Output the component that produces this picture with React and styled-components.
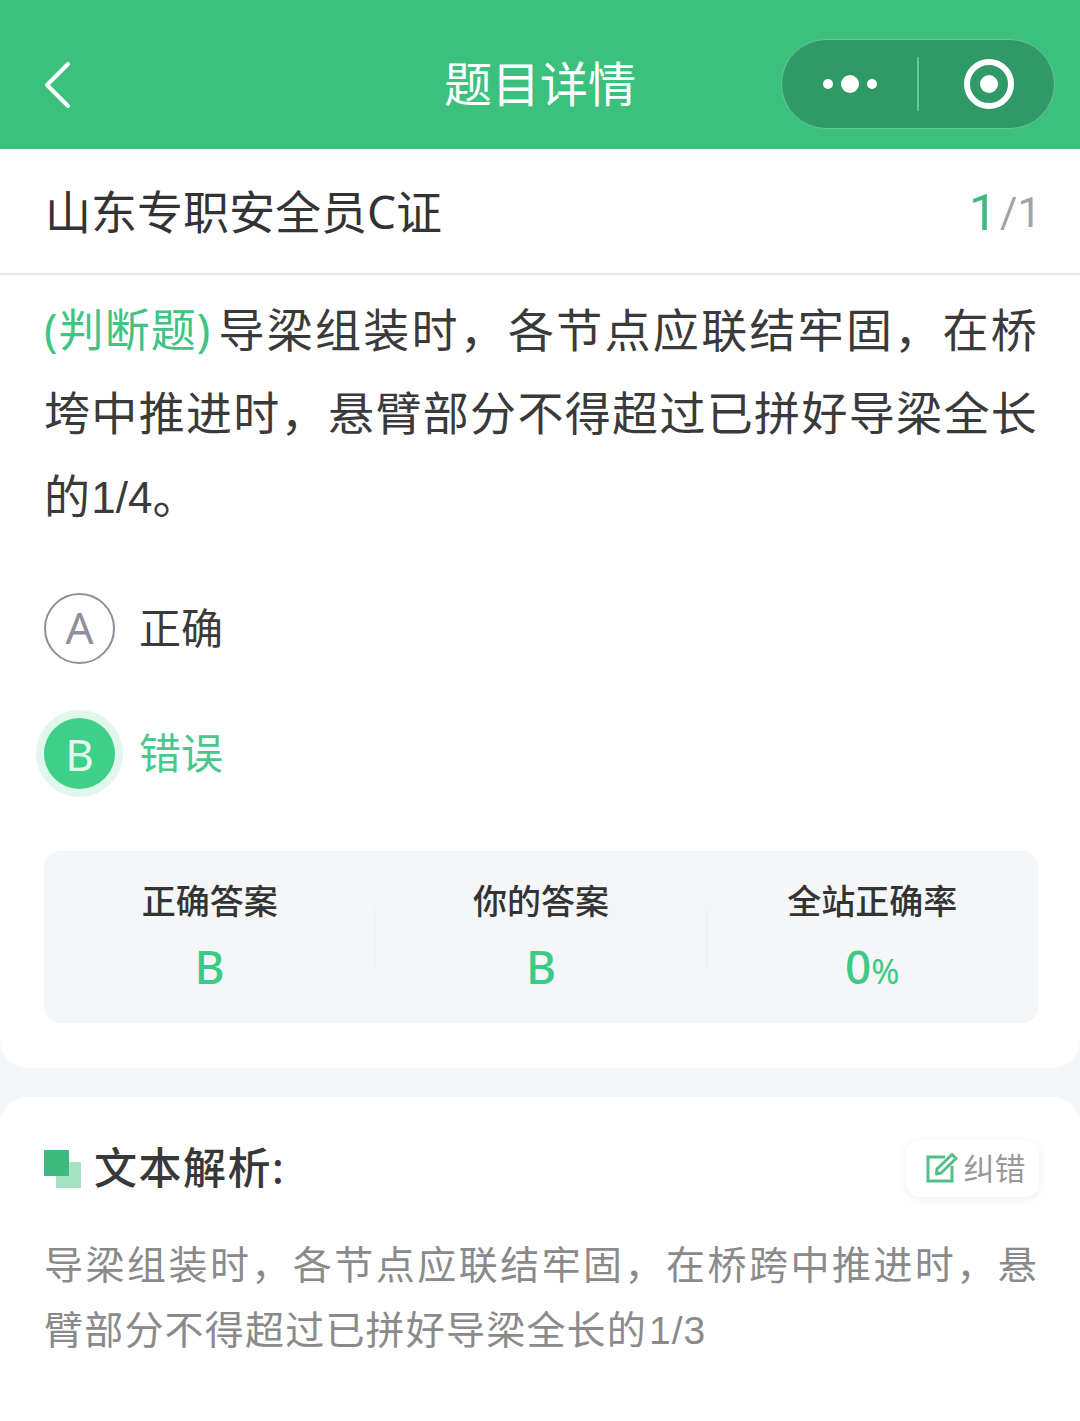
import styled, { createGlobalStyle } from 'styled-components';

const GlobalStyle = createGlobalStyle`
    html, body { margin: 0; padding: 0; background: #f5f6f7; }
    body { font-family: "Noto Sans", "Noto Sans CJK SC", sans-serif; }
    * { box-sizing: border-box; }
`;

const Page = styled.div`
    width: 1080px;
    height: 1421px;
    overflow: hidden;
    background: #f5f6f7;
`;

const NavBar = styled.header`
    height: 149px;
    background: #3cc07e;
    display: grid;
    grid-template-columns: 1fr auto 1fr;
    align-items: center;
    padding: 24px 25px 0;
`;

const BackIcon = styled.svg`
    width: 28px;
    height: 48px;
    margin-left: 18px;
    margin-top: -4px;
`;

const NavTitle = styled.h1`
    margin: -6px 0 0;
    font-size: 48px;
    line-height: 60px;
    font-weight: 400;
    color: #fff;
`;

const Capsule = styled.div`
    justify-self: end;
    width: 274px;
    height: 90px;
    margin-top: -6px;
    border-radius: 45px;
    background: #2f9968;
    border: 1.5px solid #66c796;
    display: flex;
    align-items: center;
`;

const CapsuleSide = styled.div`
    flex: 1;
    display: flex;
    align-items: center;
    justify-content: center;
    gap: 8px;
`;

const CapsuleDivider = styled.div`
    width: 1.5px;
    height: 54px;
    background: #66c796;
`;

const Dot = styled.span`
    width: ${p => p.$size}px;
    height: ${p => p.$size}px;
    border-radius: 50%;
    background: #fff;
`;

const Record = styled.div`
    width: 50px;
    height: 50px;
    margin-left: 5px;
    border-radius: 50%;
    border: 6px solid #fff;
    display: flex;
    align-items: center;
    justify-content: center;

    &::after {
        content: '';
        width: 18px;
        height: 18px;
        border-radius: 50%;
        background: #fff;
    }
`;

const SubHeader = styled.div`
    height: 126px;
    background: #fff;
    border-bottom: 2px solid #e8e8e8;
    padding: 0 39px 0 45px;
    display: flex;
    align-items: center;
    justify-content: space-between;
`;

const SubTitle = styled.div`
    font-size: 46px;
    color: #333;
    margin-top: -4px;
`;

const Counter = styled.div`
    display: flex;
    align-items: center;
    color: #a3a3a3;
    font-family: "Roboto", sans-serif;
    font-size: 42px;
    line-height: 50px;
    margin-top: 3px;
`;

const CounterCurrent = styled.span`
    color: #3dba7e;
    font-size: 50px;
    margin-right: 3px;
`;

const QuestionCard = styled.section`
    height: 793px;
    background: #fff;
    border-radius: 0 0 28px 28px;
    padding: 13px 42px 0 44px;
`;

const Question = styled.p`
    margin: 0;
    font-size: 46px;
    line-height: 83px;
    color: #3a3a3a;
    letter-spacing: 1.2px;
    text-align: justify;
`;

const Tag = styled.span`
    color: #3fc484;
    font-size: 45px;
    letter-spacing: 0;
    margin-right: 7px;
`;

const Digits = styled.span`
    font-family: "Liberation Sans", sans-serif;
    font-size: ${p => (p.$wide ? '39px' : '44px')};
    letter-spacing: ${p => (p.$wide ? '1px' : '0')};
    margin-left: ${p => (p.$wide ? '2px' : '0')};
`;

const OptionList = styled.div`
    margin-top: 54px;
    display: flex;
    flex-direction: column;
    gap: 54px;
`;

const Option = styled.div`
    display: flex;
    align-items: center;
    gap: 24px;
    height: 71px;
`;

const OptionBadge = styled.div`
    width: 71px;
    height: 71px;
    border-radius: 50%;
    display: flex;
    align-items: center;
    justify-content: center;
    font-size: 44px;
    font-weight: 400;
    padding-bottom: ${p => (p.$active ? '0' : '3px')};
    color: ${p => (p.$active ? '#e4f8ee' : '#8e8e9e')};
    background: ${p => (p.$active ? '#3dd088' : '#fff')};
    border: ${p => (p.$active ? 'none' : '2.5px solid #8e8e9e')};
    box-shadow: ${p => (p.$active ? '0 0 0 8px #e2f7ec' : 'none')};
`;

const OptionText = styled.div`
    font-size: 42px;
    margin-top: -7px;
    color: ${p => (p.$active ? '#4cc78b' : '#3a3a3a')};
`;

const Summary = styled.div`
    margin: 62px 0 0;
    height: 172px;
    background: #f5f6f7;
    border-radius: 16px;
    display: grid;
    grid-template-columns: repeat(3, 1fr);
    align-items: center;
`;

const SummaryCell = styled.div`
    height: 100%;
    position: relative;
    display: flex;
    flex-direction: column;
    align-items: center;
    padding-top: 25px;
    gap: 9px;

    & + &::before {
        content: '';
        position: absolute;
        left: -1px;
        top: 57px;
        width: 1px;
        height: 60px;
        background: #eceded;
    }
`;

const SummaryLabel = styled.div`
    font-size: 34px;
    line-height: 50px;
    font-weight: 500;
    color: #333;
`;

const SummaryValue = styled.div`
    font-size: 46px;
    line-height: 62px;
    font-weight: 500;
    color: #3dca87;
`;

const Percent = styled.span`
    font-size: 34px;
    font-weight: 400;
`;

const AnalysisCard = styled.section`
    margin-top: 29px;
    height: 340px;
    background: #fff;
    border-radius: 28px 28px 0 0;
    padding: 41px 41px 0 44px;
`;

const AnalysisHead = styled.div`
    display: flex;
    align-items: center;
    justify-content: space-between;
    height: 58px;
`;

const AnalysisTitle = styled.h2`
    margin: 0;
    display: flex;
    align-items: center;
    gap: 13px;
    font-size: 43px;
    font-weight: 500;
    color: #383838;
    letter-spacing: 1.5px;
`;

const TitleText = styled.span`
    margin-top: -3px;
`;

const SquaresIcon = styled.svg`
    width: 37px;
    height: 38px;
    margin-top: 3px;
`;

const FixButton = styled.button`
    width: 133px;
    height: 57px;
    margin-top: 2px;
    border: none;
    border-radius: 14px;
    background: #fff;
    box-shadow: 0 2px 10px rgba(0, 0, 0, 0.07);
    display: flex;
    align-items: center;
    justify-content: center;
    gap: 6px;
    font-family: inherit;
    font-size: 31px;
    color: #999;
    padding: 0 0 0 6px;
`;

const FixLabel = styled.span`
    margin-top: -3px;
`;

const Analysis = styled.p`
    margin: 35px 1px 0 0;
    font-size: 39px;
    line-height: 65px;
    color: #8a8a8a;
    letter-spacing: 1.2px;
    text-align: justify;
`;

function App() {
    return (
        <Page>
            <GlobalStyle />
            <NavBar>
                <BackIcon viewBox="0 0 28 48" fill="none">
                    <path d="M25 3 L4 24 L25 45" stroke="#fff" strokeWidth="4" strokeLinecap="round" strokeLinejoin="round" />
                </BackIcon>
                <NavTitle>题目详情</NavTitle>
                <Capsule>
                    <CapsuleSide>
                        <Dot $size={10} />
                        <Dot $size={18} />
                        <Dot $size={10} />
                    </CapsuleSide>
                    <CapsuleDivider />
                    <CapsuleSide>
                        <Record />
                    </CapsuleSide>
                </Capsule>
            </NavBar>

            <SubHeader>
                <SubTitle>山东专职安全员C证</SubTitle>
                <Counter>
                    <CounterCurrent>1</CounterCurrent>
                    <span>/</span>
                    <span>1</span>
                </Counter>
            </SubHeader>

            <QuestionCard>
                <Question>
                    <Tag>(判断题)</Tag>导梁组装时，各节点应联结牢固，在桥垮中推进时，悬臂部分不得超过已拼好导梁全长的<Digits>1/4</Digits>。
                </Question>

                <OptionList>
                    <Option>
                        <OptionBadge>A</OptionBadge>
                        <OptionText>正确</OptionText>
                    </Option>
                    <Option>
                        <OptionBadge $active>B</OptionBadge>
                        <OptionText $active>错误</OptionText>
                    </Option>
                </OptionList>

                <Summary>
                    <SummaryCell>
                        <SummaryLabel>正确答案</SummaryLabel>
                        <SummaryValue>B</SummaryValue>
                    </SummaryCell>
                    <SummaryCell>
                        <SummaryLabel>你的答案</SummaryLabel>
                        <SummaryValue>B</SummaryValue>
                    </SummaryCell>
                    <SummaryCell>
                        <SummaryLabel>全站正确率</SummaryLabel>
                        <SummaryValue>0<Percent>%</Percent></SummaryValue>
                    </SummaryCell>
                </Summary>
            </QuestionCard>

            <AnalysisCard>
                <AnalysisHead>
                    <AnalysisTitle>
                        <SquaresIcon viewBox="0 0 37 38">
                            <rect x="12" y="12" width="25" height="26" fill="#a5e3c3" />
                            <rect x="0" y="0" width="25" height="26" fill="#3dbb7e" />
                        </SquaresIcon>
                        <TitleText>文本解析:</TitleText>
                    </AnalysisTitle>
                    <FixButton>
                        <svg width="32" height="32" viewBox="0 0 32 32" fill="none">
                            <path d="M19 5 H2 V29 H26 V14" stroke="#55bd88" strokeWidth="3" />
                            <path d="M11 17 L26 2.5 L30 6.5 L15 21 L10.5 22 Z" stroke="#55bd88" strokeWidth="3" strokeLinejoin="round" />
                        </svg>
                        <FixLabel>纠错</FixLabel>
                    </FixButton>
                </AnalysisHead>
                <Analysis>
                    导梁组装时，各节点应联结牢固，在桥跨中推进时，悬臂部分不得超过已拼好导梁全长的<Digits $wide>1/3</Digits>
                </Analysis>
            </AnalysisCard>
        </Page>
    );
}

export default App;
